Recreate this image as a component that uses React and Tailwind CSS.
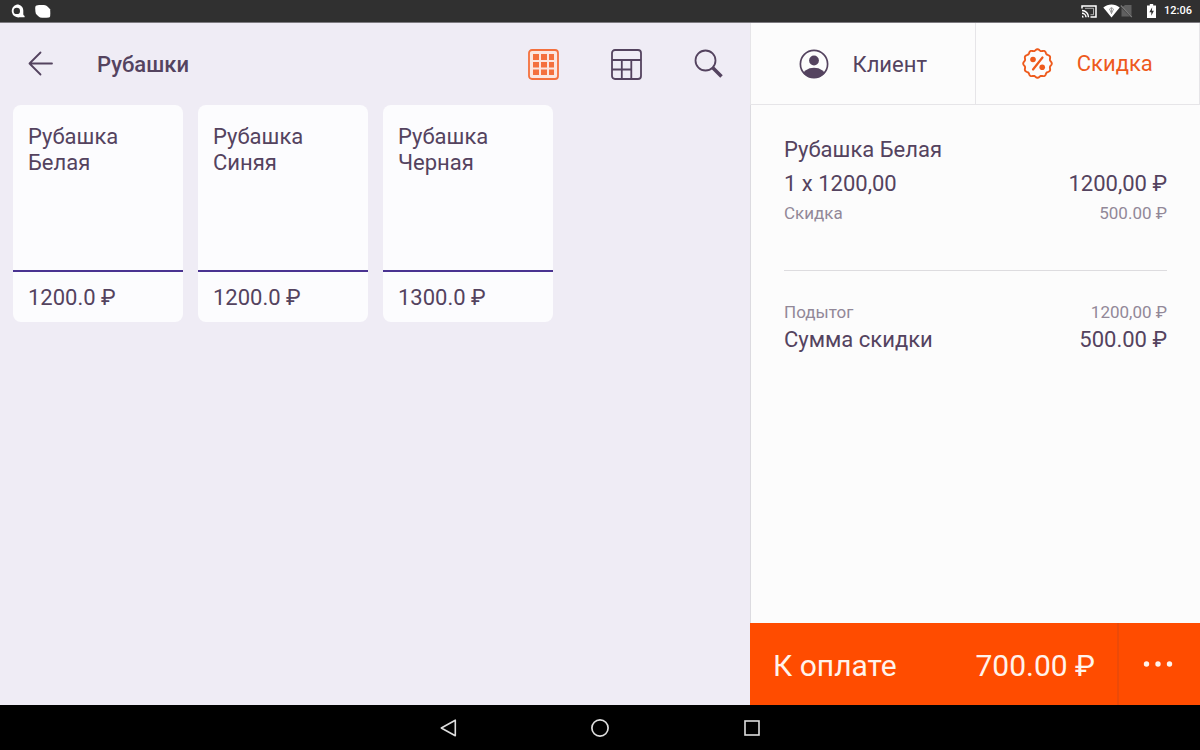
import React, { useState } from 'react';

const products = [
  { id: 1, name: 'Рубашка Белая', price: '1200.0 ₽' },
  { id: 2, name: 'Рубашка Синяя', price: '1200.0 ₽' },
  { id: 3, name: 'Рубашка Черная', price: '1300.0 ₽' },
];

// Wavy outline of the discount badge
const badgePath = (() => {
  const points = [];
  for (let i = 0; i < 144; i++) {
    const a = (i / 144) * Math.PI * 2;
    const r = 13.6 + 0.7 * Math.cos(12 * a);
    points.push(`${(15.5 + r * Math.sin(a)).toFixed(2)} ${(15.5 - r * Math.cos(a)).toFixed(2)}`);
  }
  return `M${points.join('L')}Z`;
})();

function StatusBar() {
  return (
    <div className="flex h-[23px] shrink-0 items-center justify-between border-b border-[#7d7b80] bg-[#303030] pr-2 pl-[10px] text-white">
      <div className="flex items-center gap-[10px]">
        <svg width="15" height="14" viewBox="0 0 15 14" fill="currentColor">
          <path
            fillRule="evenodd"
            d="M7 .5c3.600 0 6.200 2.500 6.300 6v3.500c0 1 .5 1.500 1.300 2V13.300h-5A6.500 6.500 0 1 1 7 .5zM6.800 3.700a3.200 3.200 0 1 0 0 6.400 3.200 3.200 0 0 0 0-6.400z"
          />
        </svg>
        <svg width="16" height="13" viewBox="0 0 16 13" fill="currentColor">
          <path d="M1.500.5C4.500-.1 8.500-.1 11 .4c1.500 1 3 2.400 4 3.800.4 2.200.4 5 .1 7.200-.3.6-.7.9-1.300 1-2.800.4-6 .4-8.600.1C3.500 11.600 2 10.200.9 8.700.2 6.500.1 4 .3 2 .5 1.100.8.7 1.500.5z" />
        </svg>
      </div>
      <div className="flex items-center">
        <svg width="16" height="13" viewBox="0 0 16 13" fill="none" stroke="currentColor" strokeWidth="1.5">
          <path d="M1 3.500V.9h14v11.200H9.500" />
          <path d="M1 5.600a6.500 6.500 0 0 1 6.500 6.600M1 8.300a4 4 0 0 1 4 3.900" />
          <path d="M4 3.300h8.500v6.400h-3" strokeOpacity="0.6" strokeWidth="1" />
          <path d="M1 10.600a1.800 1.800 0 0 1 1.700 1.800H1z" fill="currentColor" stroke="none" />
        </svg>
        <svg className="ml-[6px]" width="17" height="14" viewBox="0 0 17 14">
          <path d="M.3 3.500C5-.4 12-.4 16.700 3.500L8.500 13.600z" fill="currentColor" />
          <path d="M8.500 3.500l2 1.500-2 4.500-2-4.500zM8.500 4v6" stroke="#9a9a9a" fill="none" />
        </svg>
        <svg width="13" height="14" viewBox="0 0 13 14">
          <path d="M5 1h6.500v10.500L2.500 3zM1.500 4v8.500h8.500z" fill="#606060" />
          <path d="M.8 1.500l11 11.500" stroke="#7a7a7a" strokeWidth="1.2" />
        </svg>
        <svg className="ml-[14px]" width="9" height="15" viewBox="0 0 9 15">
          <path d="M2.800 0h3.400v1.400H9V14H0V1.400h2.800z" fill="currentColor" />
          <path d="M5.200 3.300L2.300 8.200h2v3.600l2.600-5.100h-2z" fill="#303030" />
        </svg>
        <span className="ml-2 text-[11px] font-medium">12:06</span>
      </div>
    </div>
  );
}

function ProductCard({ product }) {
  return (
    <button type="button" className="flex h-[217px] w-[170px] flex-col overflow-hidden rounded-lg bg-[#fcfcfe] text-left">
      <span className="w-full flex-1 border-b-2 border-[#4a3391] pt-[19px] pr-8 pl-[15px]">{product.name}</span>
      <span className="flex h-[50px] items-center px-[15px] pt-[2px]">{product.price}</span>
    </button>
  );
}

function Catalog() {
  const [view, setView] = useState('grid');

  return (
    <main className="flex min-w-0 flex-5 flex-col bg-[#efecf5]">
      <header className="flex h-[82px] items-center pr-[27px] pl-7">
        <button type="button" aria-label="Назад">
          <svg width="25" height="26" viewBox="0 0 25 26" fill="none" stroke="currentColor" strokeWidth="1.8" strokeLinecap="round" strokeLinejoin="round">
            <path d="M24 12.500H1.500M12.500 1.500L1.500 12.500l11 11" />
          </svg>
        </button>
        <h1 className="ml-11 pt-[2px] font-medium">Рубашки</h1>
        <div className="ml-auto flex items-center gap-[52px]">
          <button type="button" aria-label="Плитка" aria-pressed={view === 'grid'} onClick={() => setView('grid')}>
            <svg width="31" height="31" viewBox="0 0 31 31">
              <rect x="1" y="1" width="29" height="29" rx="3" fill="#fbe6e0" stroke="#f4703d" strokeWidth="1.8" />
              <path d="M5 5h6v6H5zM13 5h6v6h-6zM21 5h5v6h-5zM5 13h6v5.500H5zM13 13h6v5.500h-6zM21 13h5v5.500h-5zM5 20.500h6v5.500H5zM13 20.500h6v5.500h-6zM21 20.500h5v5.500h-5z" fill="#f4703d" />
            </svg>
          </button>
          <button type="button" aria-label="Таблица" aria-pressed={view === 'table'} onClick={() => setView('table')}>
            <svg width="31" height="31" viewBox="0 0 31 31" fill="none" stroke="currentColor" strokeWidth="1.8">
              <rect x="1" y="1" width="29" height="29" rx="3" />
              <path d="M1 11h29M10.800 11V30M20.300 11V30M1 20.500h19.300" />
            </svg>
          </button>
          <button type="button" aria-label="Поиск">
            <svg width="29" height="30" viewBox="0 0 29 30" fill="none" stroke="currentColor">
              <circle cx="11.5" cy="11.5" r="10" strokeWidth="1.8" />
              <path d="M18.500 18.500l2 2" strokeWidth="2" />
              <path d="M19 19l8.500 8.500" strokeWidth="3.6" />
            </svg>
          </button>
        </div>
      </header>
      <div className="flex flex-wrap gap-[15px] px-[13px]">
        {products.map((product) => (
          <ProductCard key={product.id} product={product} />
        ))}
      </div>
    </main>
  );
}

function Receipt() {
  return (
    <aside className="flex min-w-0 flex-3 flex-col bg-[#fcfcfc]">
      <div className="flex h-[82px] border-x border-b border-[#e6e5e8]">
        <button type="button" className="flex flex-1 items-center justify-center gap-6 border-r border-[#e6e5e8]">
          <svg width="30" height="30" viewBox="0 0 30 30">
            <clipPath id="avatar">
              <circle cx="15" cy="15" r="14" />
            </clipPath>
            <circle cx="15" cy="15" r="13.6" fill="none" stroke="currentColor" strokeWidth="1.7" />
            <circle cx="15" cy="11.5" r="4.9" fill="currentColor" />
            <ellipse cx="15" cy="27" rx="11.5" ry="8.2" fill="currentColor" clipPath="url(#avatar)" />
          </svg>
          <span className="pt-[2px]">Клиент</span>
        </button>
        <button type="button" className="flex flex-1 items-center justify-center gap-6 text-[#ee5a1c]">
          <svg width="31" height="31" viewBox="0 0 31 31" fill="none" stroke="currentColor">
            <path d={badgePath} strokeWidth="1.9" strokeLinejoin="round" />
            <path d="M20.500 9.500l-9.500 12" strokeWidth="2.2" strokeLinecap="round" />
            <circle cx="11" cy="11.5" r="2.8" fill="currentColor" stroke="none" />
            <circle cx="20.2" cy="19.2" r="2.8" fill="currentColor" stroke="none" />
          </svg>
          <span>Скидка</span>
        </button>
      </div>

      <div className="flex-1 border-l border-[#dcdbe0] px-[33px] pt-7">
        <section>
          <h2 className="leading-[34px]">Рубашка Белая</h2>
          <div className="flex justify-between leading-[34px]">
            <span>1 x 1200,00</span>
            <span>1200,00 ₽</span>
          </div>
          <div className="flex justify-between text-[17px] leading-6 text-[#928898]">
            <span>Скидка</span>
            <span>500.00 ₽</span>
          </div>
        </section>
        <dl className="mt-[45px] border-t border-[#dddcdf] pt-[29px]">
          <div className="flex justify-between text-[17px] leading-6 text-[#928898]">
            <dt>Подытог</dt>
            <dd>1200,00 ₽</dd>
          </div>
          <div className="flex justify-between leading-8">
            <dt>Сумма скидки</dt>
            <dd>500.00 ₽</dd>
          </div>
        </dl>
      </div>

      <div className="flex h-[82px] bg-[#ff4c00] text-[30px] text-[#fff3ec]">
        <button type="button" className="flex flex-1 items-center justify-between border-r-2 border-[#ec4a08] pt-[3px] pr-[22px] pl-[23px]">
          <span>К оплате</span>
          <span>700.00 ₽</span>
        </button>
        <button type="button" aria-label="Ещё" className="flex w-[81px] items-center justify-center pr-1">
          <svg width="30" height="6" viewBox="0 0 30 6" fill="currentColor">
            <circle cx="3.5" cy="3" r="2.7" />
            <circle cx="15" cy="3" r="2.7" />
            <circle cx="26.5" cy="3" r="2.7" />
          </svg>
        </button>
      </div>
    </aside>
  );
}

function NavBar() {
  return (
    <nav className="flex h-[45px] shrink-0 items-center justify-center gap-32 bg-black text-[#dedede]">
      <button type="button" aria-label="Назад">
        <svg width="24" height="24" viewBox="0 0 24 24" fill="none" stroke="currentColor" strokeWidth="1.6" strokeLinejoin="round">
          <path d="M19.300 4.200v15.600L5.300 12z" />
        </svg>
      </button>
      <button type="button" aria-label="Домой">
        <svg width="24" height="24" viewBox="0 0 24 24" fill="none" stroke="currentColor" strokeWidth="1.7">
          <circle cx="12" cy="12" r="8.1" />
        </svg>
      </button>
      <button type="button" aria-label="Недавние">
        <svg width="24" height="24" viewBox="0 0 24 24" fill="none" stroke="currentColor" strokeWidth="1.6">
          <rect x="5" y="5" width="14" height="14" />
        </svg>
      </button>
    </nav>
  );
}

export default function App() {
  return (
    <div className="flex min-h-screen flex-col font-['Roboto',sans-serif] text-[22px] leading-[26px] text-[#54435f]">
      <StatusBar />
      <div className="flex flex-1">
        <Catalog />
        <Receipt />
      </div>
      <NavBar />
    </div>
  );
}
